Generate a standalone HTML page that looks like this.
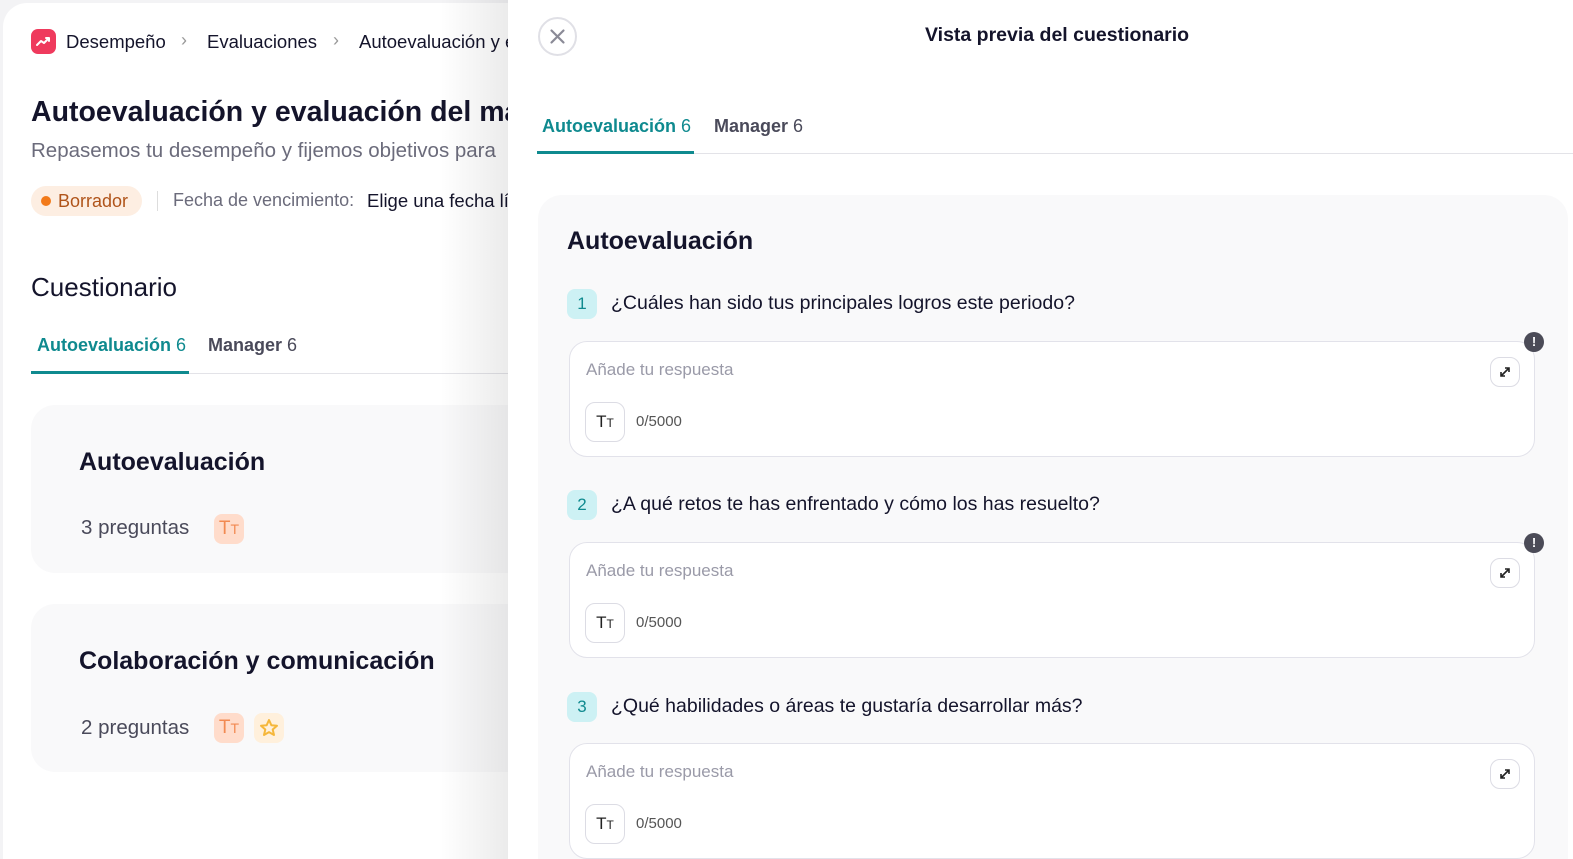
<!DOCTYPE html>
<html style="height:859px;overflow:hidden"><head><meta charset="utf-8"><style>
*{box-sizing:border-box;margin:0;padding:0}
body{width:1573px;height:859px;overflow:hidden;background:#f3f3f5;font-family:"Liberation Sans",sans-serif;color:#14142b;position:relative}
.left{position:absolute;left:3px;top:3px;width:560px;height:856px;background:#fff;border-radius:24px 0 0 0}
.ic{display:inline-block;width:30px;height:30px;border-radius:8px}
.abs{position:absolute;white-space:nowrap}
.card{position:absolute;left:31px;width:520px;background:#f9f9fa;border-radius:24px}
.shade{position:absolute;left:440px;top:0;width:68px;height:859px;background:linear-gradient(to right,rgba(0,0,0,0),rgba(0,0,0,0.08))}
.panel{position:absolute;left:508px;top:0;width:1065px;height:859px;background:#fff;overflow:hidden}
.tab{font-size:18px;font-weight:bold;color:#4a4a5a}
.tab span{font-weight:normal}
.pc{position:absolute;left:30px;top:195px;width:1030px;height:700px;background:#f9f9fa;border-radius:24px}
.q{position:absolute;left:29px;font-size:19.5px;color:#14142b;white-space:nowrap}
.q b{display:inline-block;width:30px;height:30px;border-radius:8px;background:#cdf1f4;color:#0f8a8f;text-align:center;line-height:30px;font-weight:normal;font-size:17px;margin-right:14px}
.box{position:absolute;left:31px;width:966px;height:116px;background:#fff;border:1px solid #e2e2ea;border-radius:18px}
.ph{position:absolute;left:16px;top:18px;font-size:17px;color:#9a9aa8}
.tt{position:absolute;left:15px;top:60px;width:40px;height:40px;border:1px solid #dcdce4;border-radius:10px;font-size:17px;text-align:center;line-height:38px;color:#222}
.cnt{position:absolute;left:66px;top:71px;font-size:15px;color:#555}
.exp{position:absolute;right:14px;top:15px;width:30px;height:30px;border:1px solid #dcdce4;border-radius:10px;background:#fff}
.warn{position:absolute;right:-10px;top:-10px;width:20px;height:20px;border-radius:50%;background:#4b4b57;color:#fff;font-size:13px;font-weight:bold;text-align:center;line-height:20px}
</style></head><body>
<div class="left"></div>
<div class="abs" style="left:31px;top:29px;width:25px;height:25px;border-radius:7px;background:#ef3a5d"><svg width="25" height="25" viewBox="0 0 25 25"><path d="M6 16 L10 12 L13 14 L18 9 M15 9 H18 V12" stroke="#fff" stroke-width="2" fill="none" stroke-linecap="round" stroke-linejoin="round"/></svg></div>
<div class="abs" style="left:66px;top:31px;font-size:18.5px">Desempeño</div>
<div class="abs" style="left:181px;top:30px;font-size:18px;color:#999">›</div>
<div class="abs" style="left:207px;top:31px;font-size:18.5px">Evaluaciones</div>
<div class="abs" style="left:333px;top:30px;font-size:18px;color:#999">›</div>
<div class="abs" style="left:359px;top:31px;font-size:18.5px">Autoevaluación y e</div>
<div class="abs" style="left:31px;top:96px;font-size:28.5px;font-weight:bold">Autoevaluación y evaluación del már</div>
<div class="abs" style="left:31px;top:139px;font-size:20.5px;color:#6b6b7b">Repasemos tu desempeño y fijemos objetivos para</div>
<div class="abs" style="left:31px;top:186px;width:111px;height:30px;border-radius:15px;background:#fdeee2;color:#b0541a;font-size:18px;line-height:30px;padding-left:27px">Borrador<span style="position:absolute;left:10px;top:10px;width:10px;height:10px;border-radius:50%;background:#f27a1a"></span></div>
<div class="abs" style="left:157px;top:191px;width:1px;height:20px;background:#ddd"></div>
<div class="abs" style="left:173px;top:190px;font-size:18px;color:#6b6b7b">Fecha de vencimiento:</div>
<div class="abs" style="left:367px;top:190px;font-size:18.5px">Elige una fecha lí</div>
<div class="abs" style="left:31px;top:272px;font-size:26px">Cuestionario</div>
<div class="abs tab" style="left:37px;top:335px;color:#0f8a8f">Autoevaluación <span>6</span></div>
<div class="abs tab" style="left:208px;top:335px">Manager <span>6</span></div>
<div class="abs" style="left:31px;top:373px;width:480px;height:1px;background:#e3e3e8"></div>
<div class="abs" style="left:31px;top:371px;width:158px;height:3px;background:#0f8a8f"></div>
<div class="card" style="top:405px;height:168px"></div>
<div class="abs" style="left:79px;top:448px;font-size:25px;font-weight:bold">Autoevaluación</div>
<div class="abs" style="left:81px;top:516px;font-size:20.5px;color:#4a4a5a">3 preguntas</div>
<div class="abs ic" style="left:214px;top:514px;background:#ffdccb;color:#f28a52;font-size:19px;text-align:center;line-height:30px">T<span style="font-size:14px">T</span></div>
<div class="card" style="top:604px;height:168px"></div>
<div class="abs" style="left:79px;top:647px;font-size:25px;font-weight:bold">Colaboración y comunicación</div>
<div class="abs" style="left:81px;top:716px;font-size:20.5px;color:#4a4a5a">2 preguntas</div>
<div class="abs ic" style="left:214px;top:713px;background:#ffdccb;color:#f28a52;font-size:19px;text-align:center;line-height:30px">T<span style="font-size:14px">T</span></div>
<div class="abs ic" style="left:254px;top:713px;background:#fff0dc"><svg width="30" height="30" viewBox="0 0 30 30"><path d="M15 7 L17.4 12.3 L23 12.8 L18.7 16.5 L20 22 L15 19.1 L10 22 L11.3 16.5 L7 12.8 L12.6 12.3 Z" fill="none" stroke="#f5b73b" stroke-width="2" stroke-linejoin="round"/></svg></div>
<div class="shade"></div>
<div class="panel">
<div class="abs" style="left:30px;top:17px;width:39px;height:39px;border-radius:50%;border:2px solid #e0e0e6"><svg width="35" height="35" viewBox="0 0 35 35"><path d="M11.5 11.5 L23.5 23.5 M23.5 11.5 L11.5 23.5" stroke="#8a8a96" stroke-width="2.2" stroke-linecap="round"/></svg></div>
<div class="abs" style="left:417px;top:24px;font-size:19.5px;font-weight:bold">Vista previa del cuestionario</div>
<div class="abs tab" style="left:34px;top:116px;color:#0f8a8f">Autoevaluación <span>6</span></div>
<div class="abs tab" style="left:206px;top:116px">Manager <span>6</span></div>
<div class="abs" style="left:29px;top:153px;width:1036px;height:1px;background:#e3e3e8"></div>
<div class="abs" style="left:29px;top:151px;width:157px;height:3px;background:#0f8a8f"></div>
<div class="pc">
<div class="abs" style="left:29px;top:32px;font-size:25px;font-weight:bold">Autoevaluación</div>
<div class="q" style="top:94px"><b>1</b>¿Cuáles han sido tus principales logros este periodo?</div>
<div class="box" style="top:146px"><div class="ph">Añade tu respuesta</div><div class="tt">T<span style="font-size:12px">T</span></div><div class="cnt">0/5000</div><div class="exp"><svg width="28" height="28" viewBox="0 0 28 28"><path d="M10 18 L18 10 M14 10 H18 V14 M10 14 V18 H14" stroke="#222" stroke-width="1.6" fill="none"/></svg></div><div class="warn">!</div></div>
<div class="q" style="top:295px"><b>2</b>¿A qué retos te has enfrentado y cómo los has resuelto?</div>
<div class="box" style="top:347px"><div class="ph">Añade tu respuesta</div><div class="tt">T<span style="font-size:12px">T</span></div><div class="cnt">0/5000</div><div class="exp"><svg width="28" height="28" viewBox="0 0 28 28"><path d="M10 18 L18 10 M14 10 H18 V14 M10 14 V18 H14" stroke="#222" stroke-width="1.6" fill="none"/></svg></div><div class="warn">!</div></div>
<div class="q" style="top:497px"><b>3</b>¿Qué habilidades o áreas te gustaría desarrollar más?</div>
<div class="box" style="top:548px"><div class="ph">Añade tu respuesta</div><div class="tt">T<span style="font-size:12px">T</span></div><div class="cnt">0/5000</div><div class="exp"><svg width="28" height="28" viewBox="0 0 28 28"><path d="M10 18 L18 10 M14 10 H18 V14 M10 14 V18 H14" stroke="#222" stroke-width="1.6" fill="none"/></svg></div></div>
</div>
</div>
</body></html>
